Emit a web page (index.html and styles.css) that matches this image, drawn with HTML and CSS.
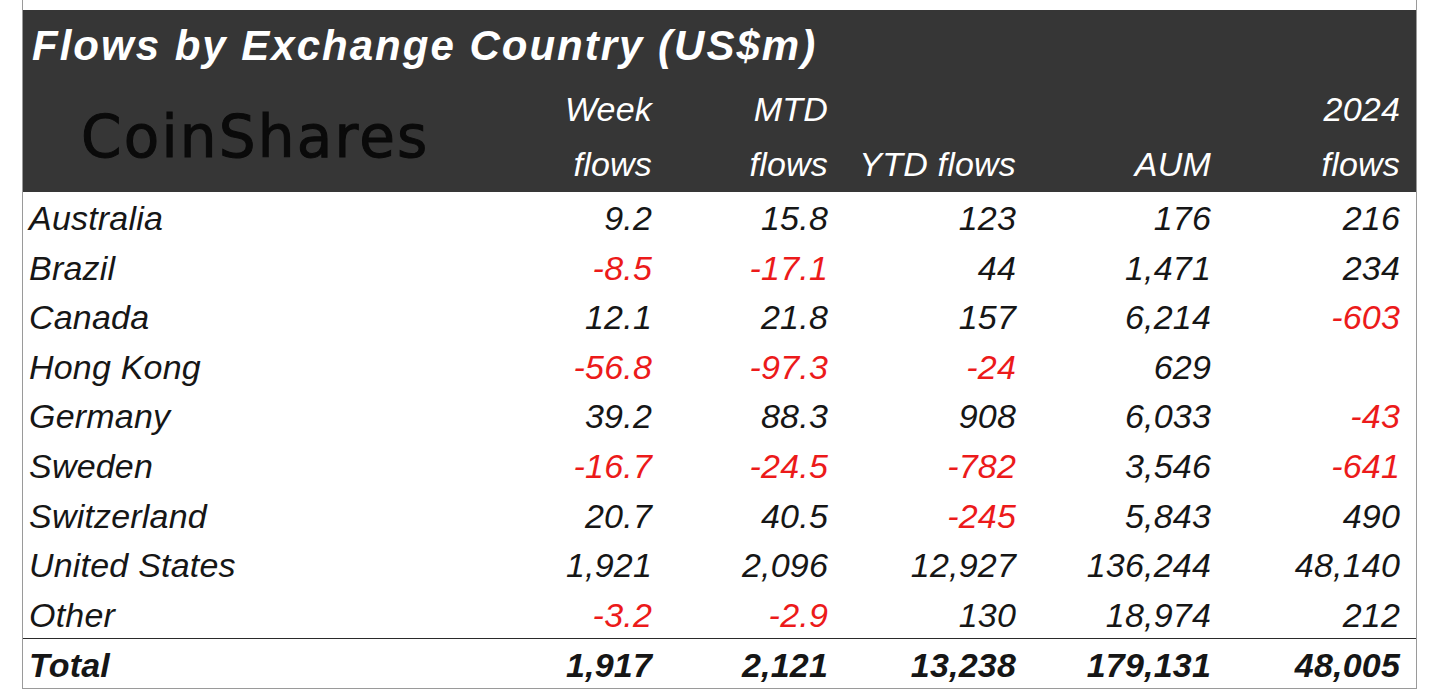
FILE: index.html
```html
<!DOCTYPE html>
<html lang="en">
<head>
<meta charset="utf-8">
<title>Flows by Exchange Country</title>
<link rel="stylesheet" href="styles.css">
</head>
<body>
<div class="frame">
  <div class="head">
    <div class="title">Flows by Exchange Country (US$m)</div>
    <div class="cols">
      <div class="logo">CoinShares</div>
      <div class="lab">Week<br>flows</div>
      <div class="lab">MTD<br>flows</div>
      <div class="lab"><br>YTD flows</div>
      <div class="lab"><br>AUM</div>
      <div class="lab">2024<br>flows</div>
    </div>
  </div>
  <div class="body">
    <div class="row"><span class="name">Australia</span><span>9.2</span><span>15.8</span><span>123</span><span>176</span><span>216</span></div>
    <div class="row"><span class="name">Brazil</span><span class="neg">-8.5</span><span class="neg">-17.1</span><span>44</span><span>1,471</span><span>234</span></div>
    <div class="row"><span class="name">Canada</span><span>12.1</span><span>21.8</span><span>157</span><span>6,214</span><span class="neg">-603</span></div>
    <div class="row"><span class="name">Hong Kong</span><span class="neg">-56.8</span><span class="neg">-97.3</span><span class="neg">-24</span><span>629</span><span></span></div>
    <div class="row"><span class="name">Germany</span><span>39.2</span><span>88.3</span><span>908</span><span>6,033</span><span class="neg">-43</span></div>
    <div class="row"><span class="name">Sweden</span><span class="neg">-16.7</span><span class="neg">-24.5</span><span class="neg">-782</span><span>3,546</span><span class="neg">-641</span></div>
    <div class="row"><span class="name">Switzerland</span><span>20.7</span><span>40.5</span><span class="neg">-245</span><span>5,843</span><span>490</span></div>
    <div class="row"><span class="name">United States</span><span>1,921</span><span>2,096</span><span>12,927</span><span>136,244</span><span>48,140</span></div>
    <div class="row"><span class="name">Other</span><span class="neg">-3.2</span><span class="neg">-2.9</span><span>130</span><span>18,974</span><span>212</span></div>
    <div class="row total"><span class="name">Total</span><span>1,917</span><span>2,121</span><span>13,238</span><span>179,131</span><span>48,005</span></div>
  </div>
</div>
</body>
</html>
```
FILE: styles.css
```css
html, body {
  margin: 0;
  padding: 0;
  background: #ffffff;
}

body {
  font-family: "Liberation Sans", Arial, sans-serif;
  font-style: italic;
  color: #161616;
}

.frame {
  margin-left: 22px;
  width: 1395px;
  box-sizing: border-box;
  padding-top: 10px;
  border-left: 1px solid #9a9a9a;
  border-right: 1px solid #9a9a9a;
  border-bottom: 1px solid #9a9a9a;
}

.head {
  background: #363636;
  color: #ffffff;
  height: 182px;
}

.title {
  height: 72px;
  line-height: 72px;
  font-size: 42px;
  font-weight: bold;
  letter-spacing: 2px;
  padding-left: 9px;
  white-space: nowrap;
}

.cols,
.row {
  display: grid;
  grid-template-columns: 457px 172px 176px 188px 195px 189px;
  padding-right: 16px;
}

.lab {
  font-size: 34px;
  line-height: 55px;
  text-align: right;
  white-space: nowrap;
  letter-spacing: 0.2px;
}

.logo {
  font-family: "DejaVu Sans", sans-serif;
  font-style: normal;
  font-size: 58px;
  line-height: 58px;
  letter-spacing: 2.2px;
  color: #0a0a0a;
  -webkit-text-stroke: 1px #0a0a0a;
  padding-left: 58px;
  align-self: center;
  margin-top: -1px;
}

.row {
  height: 49.6px;
  box-sizing: border-box;
  padding-top: 4px;
  line-height: 45.6px;
  font-size: 34px;
  letter-spacing: 0.2px;
  white-space: nowrap;
}

.row span {
  text-align: right;
}

.row .name {
  text-align: left;
  padding-left: 6px;
}

.neg {
  color: #ec1a1a;
}

.total {
  height: 50px;
  border-top: 1px solid #2a2a2a;
  font-weight: bold;
}
```
